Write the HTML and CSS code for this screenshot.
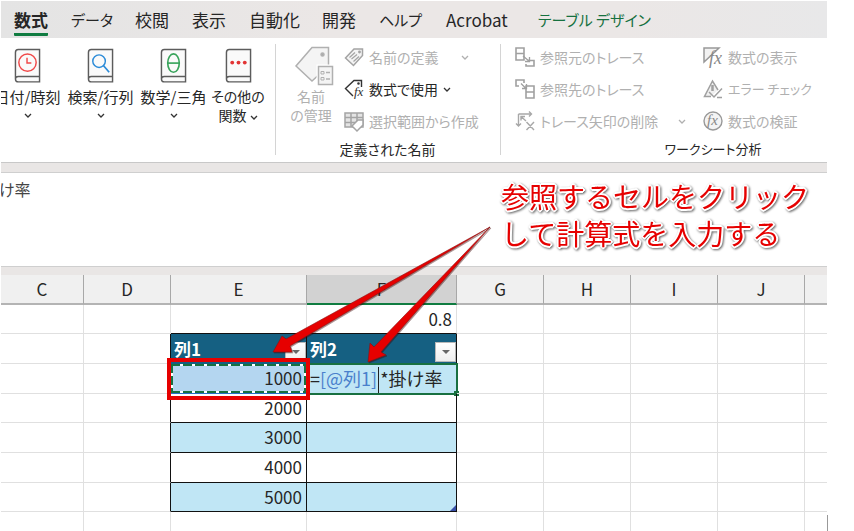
FILE: index.html
```html
<!DOCTYPE html>
<html lang="ja">
<head>
<meta charset="utf-8">
<title>数式</title>
<link rel="stylesheet" href="styles.css">
</head>
<body>
<div class="app">
  <nav class="tabs">
    <a class="active" href="#">数式</a>
    <a class="kana" href="#">データ</a>
    <a href="#">校閲</a>
    <a href="#">表示</a>
    <a href="#">自動化</a>
    <a href="#">開発</a>
    <a class="kana" href="#">ヘルプ</a>
    <a href="#">Acrobat</a>
    <a class="kana context" href="#">テーブル デザイン</a>
  </nav>

  <div class="ribbon">
    <section class="group books">
      <button class="big">
        <svg width="28" height="36" viewBox="0 0 28 36"><path class="book" d="M1.500 32V4.500Q1.500 1.500 4.500 1.500H26.500V35H4.500Q1.500 35 1.500 32Q1.500 29.500 4.500 29.500H26.500"/><circle cx="14" cy="15" r="9" stroke="#f04848" stroke-width="1.500" fill="none"/><path d="M13.500 10V15.500H18" stroke="#f04848" stroke-width="1.500" fill="none"/></svg>
        <span>日付/時刻</span>
        <svg class="chev" width="8" height="5" viewBox="0 0 8 5"><path d="M1 1L4 4L7 1"/></svg>
      </button>
      <button class="big">
        <svg width="28" height="36" viewBox="0 0 28 36"><path class="book" d="M1.500 32V4.500Q1.500 1.500 4.500 1.500H26.500V35H4.500Q1.500 35 1.500 32Q1.500 29.500 4.500 29.500H26.500"/><circle cx="12.500" cy="13.500" r="6.500" stroke="#2b8bd8" stroke-width="1.500" fill="none"/><path d="M17 18L23 25" stroke="#2b8bd8" stroke-width="1.800"/></svg>
        <span>検索/行列</span>
        <svg class="chev" width="8" height="5" viewBox="0 0 8 5"><path d="M1 1L4 4L7 1"/></svg>
      </button>
      <button class="big">
        <svg width="28" height="36" viewBox="0 0 28 36"><path class="book" d="M1.500 32V4.500Q1.500 1.500 4.500 1.500H26.500V35H4.500Q1.500 35 1.500 32Q1.500 29.500 4.500 29.500H26.500"/><ellipse cx="14" cy="15.500" rx="6" ry="9.500" stroke="#37a35a" stroke-width="1.700" fill="none"/><path d="M8 15.500H20" stroke="#37a35a" stroke-width="1.700"/></svg>
        <span>数学/三角</span>
        <svg class="chev" width="8" height="5" viewBox="0 0 8 5"><path d="M1 1L4 4L7 1"/></svg>
      </button>
      <button class="big others">
        <svg width="28" height="36" viewBox="0 0 28 36"><path class="book" d="M1.500 32V4.500Q1.500 1.500 4.500 1.500H26.500V35H4.500Q1.500 35 1.500 32Q1.500 29.500 4.500 29.500H26.500"/><g fill="#e23434"><circle cx="7.500" cy="15" r="2"/><circle cx="14" cy="15" r="2"/><circle cx="20.500" cy="15" r="2"/></g></svg>
        <span>その他の</span>
        <span>関数 <svg class="chev" width="8" height="5" viewBox="0 0 8 5"><path d="M1 1L4 4L7 1"/></svg></span>
      </button>
    </section>

    <section class="group names">
      <div class="content">
        <button class="big" disabled>
          <svg width="40" height="40" viewBox="0 0 40 40" fill="#f4f4f4" stroke="#b0b0b0" stroke-width="1.500"><path d="M18 1.500H34.500V20L18 35L2 20Z"/><circle cx="28.500" cy="8.500" r="1.500" fill="#aaa"/><rect x="22.500" y="18.500" width="17" height="20" fill="#fff" stroke="none"/><path d="M24.500 20.500H38.500V38.500H24.500Z"/><path d="M27 25.500H30V28H27ZM27 31.500H30V34H27Z" stroke-width="1"/><path d="M32 26.500H36M32 33H36"/></svg>
          <span>名前</span>
          <span>の管理</span>
        </button>
        <div class="list">
          <button disabled>
            <svg width="20" height="20" viewBox="0 0 20 20" fill="#f4f4f4" stroke="#a4a4a4" stroke-width="1.500"><path d="M10 2H18.500V8.500L9.500 18.500L1.500 11Z"/><circle cx="15.500" cy="5" r=".7"/><path d="M5.500 10.500L11 5.500M7.500 12L13 7.500M9.500 14.500L15 9.500" stroke-width="1.200"/></svg>
            <span>名前の定義</span>
            <svg class="chev far" width="8" height="5" viewBox="0 0 8 5"><path d="M1 1L4 4L7 1"/></svg>
          </button>
          <button>
            <svg width="20" height="20" viewBox="0 0 20 20" fill="none" stroke="#333" stroke-width="1.400"><path d="M17.500 8V1.500H10L1.500 9.500L9 17"/><circle cx="14.500" cy="4.500" r=".6"/><text x="10" y="17" class="fx small dark">fx</text></svg>
            <span>数式で使用</span>
            <svg class="chev" width="8" height="5" viewBox="0 0 8 5"><path d="M1 1L4 4L7 1"/></svg>
          </button>
          <button disabled>
            <svg width="20" height="20" viewBox="0 0 20 20" fill="#e4e4e4" stroke="#a4a4a4" stroke-width="1.500"><path d="M1 2H19V16H1Z"/><path d="M1 6.500H19M1 11.500H19M7 2V16M13 2V16"/><path d="M14 9H19V14L13 20L8 15Z" fill="#fff"/></svg>
            <span>選択範囲から作成</span>
          </button>
        </div>
      </div>
      <h2>定義された名前</h2>
    </section>

    <section class="group audit">
      <div class="content">
        <div class="list">
          <button disabled>
            <svg width="20" height="20" viewBox="0 0 20 20" fill="none" stroke="#a0a0a0" stroke-width="1.600"><path d="M1 1H9V6.500H1ZM1 6.500V13H9V6.500M13 13.500H19V19H11V17"/><path d="M8 9L14 14M14.500 10V14.500H10" stroke-width="1.300"/></svg>
            <span>参照元のトレース</span>
          </button>
          <button disabled>
            <svg width="20" height="20" viewBox="0 0 20 20" fill="none" stroke="#a0a0a0" stroke-width="1.600"><path d="M9 4V1H1V7H4M11 13H19V19H11ZM11 13V7H19V13"/><path d="M6 4.500L11 9.500M7 9.500H11.500V5" stroke-width="1.300"/></svg>
            <span>参照先のトレース</span>
          </button>
          <button disabled>
            <svg width="20" height="20" viewBox="0 0 20 20" fill="none" stroke="#a8a8a8" stroke-width="1.400"><path d="M3.500 3V15M1 12.500L3.500 15L6 12.500M3.500 3H16M14 .5L16.500 3L14 5.500M6 5.500L11 10M6 9.500V5.500H10M11.500 11L19 19M19 11L11.500 19"/></svg>
            <span>トレース矢印の削除</span>
            <svg class="chev far" width="8" height="5" viewBox="0 0 8 5"><path d="M1 1L4 4L7 1"/></svg>
          </button>
        </div>
        <div class="list">
          <button disabled>
            <svg width="20" height="20" viewBox="0 0 20 20" fill="none" stroke="#999" stroke-width="1.500"><path d="M16 1H1V15Z" fill="#f2f2f2"/><text x="6" y="17" class="fx big-fx">fx</text></svg>
            <span>数式の表示</span>
          </button>
          <button disabled>
            <svg width="20" height="20" viewBox="0 0 20 20" fill="none" stroke="#a0a0a0" stroke-width="1.500"><path d="M8 17.500H1.500L9.500 2L15 11" fill="#f0f0f0"/><path d="M9.500 6V12" stroke-width="2.500"/><path d="M6 13L11 18L19 9.500M14 18.500H19"/></svg>
            <span class="kana">エラー チェック</span>
          </button>
          <button disabled>
            <svg width="20" height="20" viewBox="0 0 20 20" fill="#f4f4f4" stroke="#999" stroke-width="1.400"><circle cx="10" cy="10" r="9"/><text x="4" y="14" class="fx">fx</text></svg>
            <span>数式の検証</span>
          </button>
        </div>
      </div>
      <h2 class="kana">ワークシート分析</h2>
    </section>
  </div>

  <div class="formula">
    <input type="text" value="け率" aria-label="数式バー">
  </div>

  <table class="sheet">
    <colgroup><col class="c"><col class="n"><col class="e"><col class="f"><col class="n"><col class="n"><col class="n"><col class="n"><col></colgroup>
    <thead>
      <tr><th>C</th><th>D</th><th>E</th><th class="current">F</th><th>G</th><th>H</th><th>I</th><th>J</th><th></th></tr>
    </thead>
    <tbody>
      <tr class="short"><td></td><td></td><td class="above"></td><td class="above">0.8</td><td></td><td></td><td></td><td></td><td></td></tr>
      <tr><td></td><td class="before"></td>
        <td class="title"><div>列1<button class="filter" aria-label="列1 フィルター"></button></div></td>
        <td class="title"><div>列2<button class="filter" aria-label="列2 フィルター"></button></div></td>
        <td></td><td></td><td></td><td></td><td></td></tr>
      <tr><td></td><td class="before"></td><td class="data picked">1000<i class="ants"></i><i class="redbox"></i></td>
        <td class="data band editing">=<span class="ref">[@列1]</span><i class="caret"></i>*掛け率<i class="handle"></i></td>
        <td></td><td></td><td></td><td></td><td></td></tr>
      <tr class="short"><td></td><td class="before"></td><td class="data">2000</td><td class="data"></td><td></td><td></td><td></td><td></td><td></td></tr>
      <tr><td></td><td class="before"></td><td class="data band">3000</td><td class="data band"></td><td></td><td></td><td></td><td></td><td></td></tr>
      <tr><td></td><td class="before"></td><td class="data">4000</td><td class="data"></td><td></td><td></td><td></td><td></td><td></td></tr>
      <tr class="short"><td></td><td class="before"></td><td class="data band">5000</td><td class="data band corner"></td><td></td><td></td><td></td><td></td><td></td></tr>
      <tr><td></td><td></td><td></td><td></td><td></td><td></td><td></td><td></td><td></td></tr>
    </tbody>
  </table>

  <svg class="arrows" width="230" height="150" viewBox="265 220 230 150">
    <path d="M490 227L286 339L282 336L273 352L292 352L290 346Z"/>
    <path d="M490 227L374 347L370 343L368 362L386 355L381 352Z"/>
  </svg>
  <p class="note">参照するセルをクリック<br>して計算式を入力する</p>
</div>
<i class="mark"></i>
</body>
</html>
```

FILE: styles.css
```css
* { box-sizing: border-box; }

body {
  margin: 0 27px 0 0;
  background: #fff;
  color: #262626;
  font-family: "Noto Sans CJK JP", sans-serif;
  font-size: 14px;
  line-height: 20px;
  font-feature-settings: "palt";
}

button, input { font: inherit; color: inherit; font-feature-settings: inherit; }
button { border: 0; background: none; padding: 0; white-space: nowrap; }

.app {
  position: relative;
  height: 100vh;
  overflow: hidden;
  border: solid #fff;
  border-width: 1px 0 0 1px;
}

/* Tabs */
.tabs {
  display: grid;
  grid-template-columns: 57px 64px 57px 57px 73px 57px 67px 92px 1fr;
  height: 37px;
  padding: 4px 0 0 13px;
  background: linear-gradient(90deg, #e4e4e4, #ebe7e6 40%, #ebe7e6 75%, #e8e8e9);
}
.tabs a {
  justify-self: start;
  height: 31px;
  font-size: 17px;
  line-height: 29px;
  color: #262626;
  text-decoration: none;
  white-space: nowrap;
}
.tabs .kana { font-size: 15px; }
.tabs .active { font-weight: 700; border-bottom: 3px solid #107c41; border-radius: 1px; }
.tabs .context { color: #16713f; }

/* Ribbon */
.ribbon {
  display: flex;
  height: 125px;
  border-bottom: 1px solid #c8c8c8;
}
.group { flex: none; padding-top: 8px; position: relative; }
.group + .group::before {
  content: "";
  position: absolute;
  left: 0; top: 6px; bottom: 7px;
  width: 1px;
  background: #d4d4d4;
}
.group h2 {
  margin: 0;
  font-size: 14px;
  font-weight: 400;
  line-height: 20px;
  text-align: center;
}
.group .kana { font-size: 13px; }
.books {
  display: grid;
  grid-template-columns: 73px 73px 73px 56px;
  align-items: start;
  margin-left: -10px;
  width: 284px;
}
.big {
  display: flex;
  flex-direction: column;
  align-items: center;
  font-size: 15px;
  line-height: 19px;
}
.others { font-size: 14px; }
.books .big > svg:first-child { width: 27px; height: 35px; margin: 2px 0 4px; }
.books .big > .chev { margin-top: 7px; }
.book { fill: #fafafa; stroke: #5c5c5c; stroke-width: 1.5px; }
.chev { fill: none; stroke: #333; stroke-width: 1.3px; flex: none; }
.big span .chev { vertical-align: middle; }

.names { width: 225px; }
.audit { width: 426px; }
.content { display: flex; height: 93px; }
.names .big { width: 46px; margin: 0 10px 0 13px; font-size: 14px; align-self: start; }
.names .big > svg { margin: 0 0 1px 5px; }
.list { display: flex; flex-direction: column; width: 188px; }
.names .list { width: 140px; }
.audit .list:first-child { margin-left: 15px; width: 188px; }
.list button {
  display: flex;
  align-items: center;
  gap: 5px;
  height: 32px;
  flex: none;
  padding-bottom: 10px;
}
.list .far { margin-left: auto; margin-right: 15px; }
.audit .far { margin-right: 17px; }
button:disabled { color: #b0b0b0; }
button:disabled .chev { stroke: #b0b0b0; }
.fx {
  font: italic 15px "Liberation Serif", serif;
  fill: #888;
  stroke: none;
}
.fx.small { font-size: 13px; }
.fx.big-fx { font-size: 18px; }
.fx.dark { fill: #333; }
.list svg { overflow: visible; }

/* Formula bar */
.formula {
  height: 112px;
  border: solid #e9e6e5;
  border-width: 9px 0 8px;
  background: #fff;
  box-shadow: inset 0 1px #cfcfcf, inset 0 -1px #cfcfcf;
}
.formula input {
  display: block;
  width: 100%;
  height: 34px;
  border: 0;
  padding: 0;
  text-indent: -2px;
  font-size: 16px;
  outline: 0;
  background: none;
  color: #444;
}

/* Sheet */
.sheet {
  width: 100%;
  table-layout: fixed;
  border-collapse: separate;
  border-spacing: 0;
  font-size: 17px;
  line-height: 26px;
  font-feature-settings: normal;
}
.c { width: 83px; }
.n { width: 87px; }
.e { width: 136px; }
.f { width: 150px; }
th, td { padding: 0; height: 30px; border: solid #e0e0e0; border-width: 0 1px 1px 0; }
th:last-child, td:last-child { border-right: 0; }
.short td { height: 29px; }
th {
  background: #f0f0f0;
  font-weight: 400;
  border-color: #a8a8a8;
  border-bottom: 2px solid #b4b4b4;
}
th.current { background: #d2d2d2; border-bottom-color: #107c41; }
td { position: relative; text-align: right; padding: 0 4px 1px 0; white-space: nowrap; }
.above { border-bottom-color: #111; }
.before { border-right-color: #111; }
.title, .data { border-color: #111; }
.title { background: #156082; color: #fff; font-weight: 700; border-bottom-color: #156082; padding: 0 0 0 3px; }
.title div { display: flex; justify-content: space-between; align-items: flex-end; }
.filter {
  display: flex;
  align-items: center;
  justify-content: center;
  width: 21px;
  height: 20px;
  border: 1px solid #b8b8b8;
  background: linear-gradient(#fff, #eee);
}
.filter::before { content: ""; border: solid transparent; border-width: 4px 4px 0; border-top-color: #666; }
.band { background: #c0e6f5; }
.picked { background: #b4d6f0; border-bottom-color: #2870c8; }
.ants {
  position: absolute;
  inset: 0;
  border: 2px solid #fff;
}
.ants::after {
  content: "";
  position: absolute;
  inset: -2px;
  background:
    repeating-linear-gradient(90deg, #187040 0 9px, transparent 9px 12px) top / 100% 2px no-repeat,
    repeating-linear-gradient(90deg, #187040 0 9px, transparent 9px 12px) bottom / 100% 2px no-repeat,
    repeating-linear-gradient(#187040 0 9px, transparent 9px 12px) left / 2px 100% no-repeat,
    repeating-linear-gradient(#187040 0 9px, transparent 9px 12px) right / 2px 100% no-repeat;
}
.redbox {
  position: absolute;
  inset: -6px -4px -7px -4px;
  border: 4px solid #e60000;
  z-index: 1;
}
.editing { text-align: left; padding-left: 3px; font-size: 18px; outline: 2px solid #187040; outline-offset: -1px; }
.ref { color: #4a80cc; }
.caret { display: inline-block; width: 1px; height: 28px; vertical-align: middle; margin: -6px 1px; background: #222; }
.handle { position: absolute; right: -3px; bottom: -3px; width: 5px; height: 5px; background: #187040; }
.corner::after {
  content: "";
  position: absolute;
  right: 0; bottom: 0;
  border: 3px solid #3850a8;
  border-top-color: transparent;
  border-left-color: transparent;
}

/* Callout */
.arrows {
  position: absolute;
  left: 264px;
  top: 219px;
  fill: #e60000;
  stroke: #8c1010;
  stroke-width: .6px;
  filter: drop-shadow(1px 1px 0 rgba(60, 0, 0, .45));
  z-index: 2;
}
.note {
  position: absolute;
  left: 500px;
  top: 177px;
  margin: 0;
  color: #e60000;
  font-size: 28px;
  line-height: 37px;
  white-space: nowrap;
  font-feature-settings: normal;
  text-shadow: 2px 0 #fff, -2px 0 #fff, 0 2px #fff, 0 -2px #fff, 1px 1px #fff, -1px 1px #fff, 1px -1px #fff, -1px -1px #fff;
  filter: drop-shadow(1px 1px 1px rgba(0, 0, 0, .6));
}
.mark { position: absolute; right: 26px; bottom: 0; width: 1px; height: 16px; background: #999; }
```
